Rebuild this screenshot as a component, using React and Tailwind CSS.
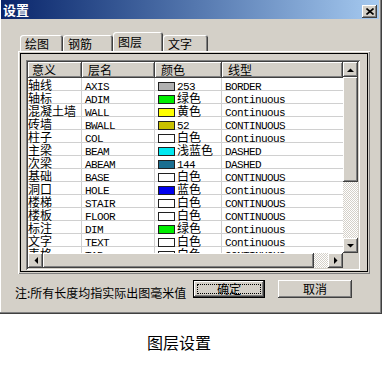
import React from "react";

const RAISED =
  "shadow-[inset_-1px_-1px_#404040,inset_1px_1px_#ffffff,inset_-2px_-2px_#808080,inset_2px_2px_#d4d0c8]";
const TRACK =
  "bg-[image:repeating-conic-gradient(#d4d0c8_0_25%,#ffffff_0_50%)] bg-[length:2px_2px]";
const MONO = "font-['Liberation_Mono',monospace] text-[11px] tracking-[-0.6px]";
const CELL = "h-[13px] pt-[1px] leading-[12px] border-b border-[#d0d0d0] whitespace-nowrap";

const LAYERS = [
  ["轴线", "AXIS", "#b0b0b0", "253", "BORDER"],
  ["轴标", "ADIM", "#00ee00", "绿色", "Continuous"],
  ["混凝土墙", "WALL", "#ffff00", "黄色", "Continuous"],
  ["砖墙", "BWALL", "#c8c000", "52", "CONTINUOUS"],
  ["柱子", "COL", "#ffffff", "白色", "Continuous"],
  ["主梁", "BEAM", "#00e8f0", "浅蓝色", "DASHED"],
  ["次梁", "ABEAM", "#1a6e90", "144", "DASHED"],
  ["基础", "BASE", "#ffffff", "白色", "CONTINUOUS"],
  ["洞口", "HOLE", "#0000ee", "蓝色", "Continuous"],
  ["楼梯", "STAIR", "#ffffff", "白色", "CONTINUOUS"],
  ["楼板", "FLOOR", "#ffffff", "白色", "CONTINUOUS"],
  ["标注", "DIM", "#00ee00", "绿色", "Continuous"],
  ["文字", "TEXT", "#ffffff", "白色", "Continuous"],
  ["表格", "TAB", "#ffffff", "白色", "CONTINUOUS"],
];

const HEADERS = [
  ["意义", "w-[54px] pl-[4px]"],
  ["层名", "w-[73px] pl-[6px]"],
  ["颜色", "w-[67px] pl-[6px]"],
  ["线型", "w-[121px] pl-[6px]"],
];

const isLatin = (s) => /^[\x00-\x7f]+$/.test(s);

const Txt = ({ children }) =>
  isLatin(children) ? <span className={MONO}>{children}</span> : <span>{children}</span>;

const Arrow = ({ dir }) => {
  const vertical = dir === "up" || dir === "down";
  const pts = {
    up: "0,4 7,4 3.5,0.5",
    down: "0,0 7,0 3.5,3.5",
    left: "4,0 4,7 0.5,3.5",
    right: "0,0 0,7 3.5,3.5",
  }[dir];
  return (
    <svg width={vertical ? 7 : 4} height={vertical ? 4 : 7} viewBox={vertical ? "0 0 7 4" : "0 0 4 7"}>
      <polygon points={pts} fill="#000" />
    </svg>
  );
};

const ScrollBtn = ({ dir }) => (
  <div className={`w-[15px] h-[15px] shrink-0 bg-[#d4d0c8] flex items-center justify-center ${RAISED}`}>
    <Arrow dir={dir} />
  </div>
);

const Tab = ({ label, width, selected }) => (
  <div
    className={
      selected
        ? `${width} h-[19px] leading-[19px] pl-[5px] rounded-t-[3px] shadow-[inset_1px_1px_#ffffff,inset_-1px_0_#404040,inset_-2px_0_#808080]`
        : `${width} h-[16px] leading-[18px] pl-[5px] rounded-t-[3px] shadow-[inset_1px_1px_#ffffff,inset_-1px_0_#404040,inset_-2px_0_#808080]`
    }
  >
    {label}
  </div>
);

function LayerList() {
  return (
    <div className="w-[334px] h-[210px] p-[2px] bg-white flex flex-col shadow-[inset_1px_1px_#808080,inset_-1px_-1px_#ffffff,inset_2px_2px_#404040,inset_-2px_-2px_#d4d0c8]">
      <div className="flex h-[191px]">
        <div className="w-[315px] flex flex-col">
          <div className="flex h-[16px] bg-[#d4d0c8]">
            {HEADERS.map(([h, cls]) => (
              <div
                key={h}
                className={`${cls} h-[16px] leading-[16px] shadow-[inset_-1px_-1px_#404040,inset_1px_1px_#ffffff,inset_-2px_-2px_#808080]`}
              >
                {h}
              </div>
            ))}
          </div>
          <div className="h-[175px] overflow-hidden">
            {LAYERS.map((r) => (
              <div key={r[1]} className="flex h-[13px]">
                <div className={`w-[54px] border-r ${CELL}`}>{r[0]}</div>
                <div className={`w-[73px] pl-[3px] border-r ${CELL}`}>
                  <Txt>{r[1]}</Txt>
                </div>
                <div className={`w-[67px] pl-[3px] border-r ${CELL}`}>
                  <span
                    className="inline-block w-[17px] h-[9px] mr-[2px] align-[-1px] border border-[#202020]"
                    style={{ background: r[2] }}
                  />
                  <Txt>{r[3]}</Txt>
                </div>
                <div className={`w-[121px] pl-[3px] ${CELL}`}>
                  <Txt>{r[4]}</Txt>
                </div>
              </div>
            ))}
          </div>
        </div>
        <div className="w-[15px] flex flex-col">
          <ScrollBtn dir="up" />
          <div className={`h-[105px] bg-[#d4d0c8] ${RAISED}`} />
          <div className={`flex-1 ${TRACK}`} />
          <ScrollBtn dir="down" />
        </div>
      </div>
      <div className="flex h-[15px]">
        <ScrollBtn dir="left" />
        <div className={`w-[271px] bg-[#d4d0c8] ${RAISED}`} />
        <div className={`w-[14px] ${TRACK}`} />
        <ScrollBtn dir="right" />
        <div className="w-[15px] bg-[#d4d0c8]" />
      </div>
    </div>
  );
}

export default function App() {
  return (
    <div className="w-[388px] h-[369px] bg-white overflow-hidden text-[12px] text-black font-['Noto_Sans_CJK_SC',sans-serif]">
      <div className="w-[382px] h-[314px] bg-[#d4d0c8] flex flex-col shadow-[inset_-1px_-1px_#404040,inset_-2px_-2px_#808080,inset_1px_0_#ffffff]">
        <div className="h-[19px] ml-[1px] mr-[3px] flex items-start justify-between bg-linear-to-r from-[#0a246a] to-[#a6caf0]">
          <span className="pl-[2px] pt-[3px] text-[13px] leading-[14px] font-bold text-white">设置</span>
          <div className={`mt-[5px] mr-[2px] w-[15px] h-[13px] bg-[#d4d0c8] flex items-center justify-center ${RAISED}`}>
            <svg width="8" height="7" viewBox="0 0 8 7">
              <path d="M0.5 0.5 L7.5 6.5 M7.5 0.5 L0.5 6.5" stroke="#000" strokeWidth="1.6" />
            </svg>
          </div>
        </div>

        <div className="h-[32px] flex items-end pl-[20px]">
          <Tab label="绘图" width="w-[43px]" />
          <Tab label="钢筋" width="w-[50px]" />
          <Tab label="图层" width="w-[50px]" selected />
          <Tab label="文字" width="w-[45px]" />
        </div>

        <div className="ml-[18px] w-[352px] h-[223px] pt-[9px] pl-[8px] shadow-[inset_1px_1px_#ffffff,inset_-1px_-1px_#808080,inset_2px_2px_#d4d0c8,inset_-2px_-2px_#d4d0c8,inset_3px_3px_#000000,inset_-3px_-3px_#000000]">
          <LayerList />
        </div>

        <div className="flex items-start mt-[6px] h-[18px]">
          <span className="w-[193px] pl-[15px] pt-[7px] leading-[12px] whitespace-nowrap">
            注:所有长度均指实际出图毫米值
          </span>
          <div className="w-[72px] h-[18px] p-[3px] bg-[#d4d0c8] border border-black shadow-[inset_-1px_-1px_#404040,inset_1px_1px_#ffffff,inset_-2px_-2px_#808080]">
            <div className="h-full border border-dotted border-black flex items-center justify-center leading-[10px]">
              确定
            </div>
          </div>
          <div className={`ml-[13px] w-[74px] h-[18px] bg-[#d4d0c8] flex items-center justify-center ${RAISED}`}>
            取消
          </div>
        </div>
      </div>

      <div className="mt-[20px] pl-[147px] text-[16px] leading-[16px]">图层设置</div>
    </div>
  );
}
